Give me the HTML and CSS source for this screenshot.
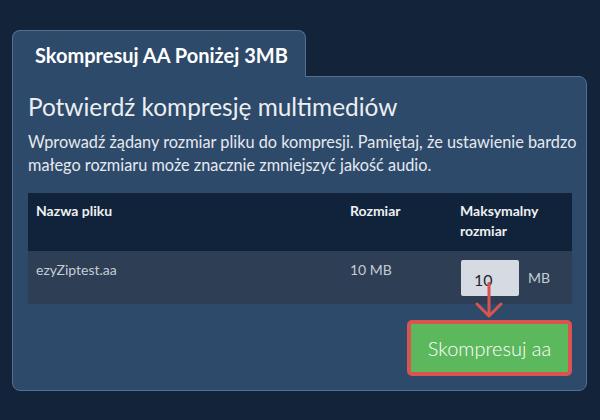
FILE: index.html
```html
<!DOCTYPE html>
<html lang="pl">
<head>
<meta charset="utf-8">
<link rel="stylesheet" href="styles.css">
</head>
<body>
<div class="wrap">
  <div class="tab">Skompresuj AA Poniżej 3MB</div>
  <div class="panel">
    <h1 class="title">Potwierdź kompresję multimediów</h1>
    <p class="desc">Wprowadź żądany rozmiar pliku do kompresji. Pamiętaj, że ustawienie bardzo małego rozmiaru może znacznie zmniejszyć jakość audio.</p>
    <table class="files">
      <thead>
        <tr>
          <th class="c-name">Nazwa pliku</th>
          <th class="c-size">Rozmiar</th>
          <th class="c-max">Maksymalny rozmiar</th>
        </tr>
      </thead>
      <tbody>
        <tr>
          <td>ezyZiptest.aa</td>
          <td>10 MB</td>
          <td>
            <div class="maxcell">
              <div class="inputwrap">
                <input class="num" type="text" value="10">
                <svg class="arrow" width="28" height="36" viewBox="0 0 28 36">
                  <path d="M14 1 V34 M2 22 L14 34 L26 22" fill="none" stroke="#d9534f" stroke-width="3" stroke-linecap="round" stroke-linejoin="round"/>
                </svg>
              </div>
              <span class="unit">MB</span>
            </div>
          </td>
        </tr>
      </tbody>
    </table>
    <div class="actions">
      <button class="go">Skompresuj aa</button>
    </div>
  </div>
</div>
</body>
</html>
```

FILE: styles.css
```css
html, body {
  margin: 0;
  padding: 0;
  background: #12233a;
}
body {
  font-family: Lato, "Noto Sans", sans-serif;
  color: #e6e9ee;
}
.wrap {
  padding: 30px 0 0 12px;
  width: 575px;
}
.tab {
  position: relative;
  z-index: 2;
  box-sizing: border-box;
  width: 294px;
  height: 47px;
  margin-bottom: -1px;
  padding: 11px 0 0 22px;
  background: #2d4a6a;
  border: 1px solid #55708f;
  border-bottom: none;
  border-radius: 8px 8px 0 0;
  font-size: 20px;
  line-height: 26px;
  font-weight: 700;
  color: #ffffff;
}
.panel {
  box-sizing: border-box;
  width: 575px;
  padding: 15px 14px 14px 15px;
  background: #2d4a6a;
  border: 1px solid #55708f;
  border-radius: 0 8px 8px 8px;
}
.title {
  margin: 0;
  font-size: 24.4px;
  line-height: 30px;
  font-weight: 400;
  color: #eceef2;
}
.desc {
  margin: 8px -8px 17px 0;
  font-size: 16.3px;
  line-height: 23px;
  color: #e6e9ee;
}
.files {
  width: 544px;
  border-collapse: collapse;
  font-size: 14px;
}
.files th {
  background: #10233a;
  text-align: left;
  vertical-align: top;
  font-weight: 700;
  line-height: 20px;
  padding: 8px 8px 10px;
  color: #eef0f3;
}
.c-name { width: 298px; }
.c-size { width: 94px; }
.c-max { width: 104px; }
.files td {
  background: #2e3f55;
  vertical-align: top;
  padding: 9px 8px 8px;
  line-height: 20px;
  color: #c6ccd5;
}
.maxcell {
  display: flex;
  align-items: center;
  gap: 9px;
  margin-left: 1px;
}
.inputwrap {
  position: relative;
  width: 58px;
  height: 36px;
}
.num {
  box-sizing: border-box;
  width: 58px;
  height: 36px;
  border: none;
  border-radius: 2px;
  background: #d6dbe3;
  padding: 3px 0 0 13px;
  font-family: Lato, "Noto Sans", sans-serif;
  font-size: 16px;
  color: #222831;
  outline: none;
}
.arrow {
  position: absolute;
  left: 14px;
  top: 22px;
}
.unit {
  font-size: 14px;
  color: #c6ccd5;
}
.actions {
  display: flex;
  justify-content: flex-end;
  margin-top: 16px;
}
.go {
  box-sizing: border-box;
  width: 165px;
  height: 56px;
  background: #5cb85c;
  border: 4.5px solid #d9534f;
  border-radius: 5px;
  font-family: Lato, "Noto Sans", sans-serif;
  font-size: 20px;
  font-weight: 300;
  color: #ffffff;
  padding: 0;
}
```
